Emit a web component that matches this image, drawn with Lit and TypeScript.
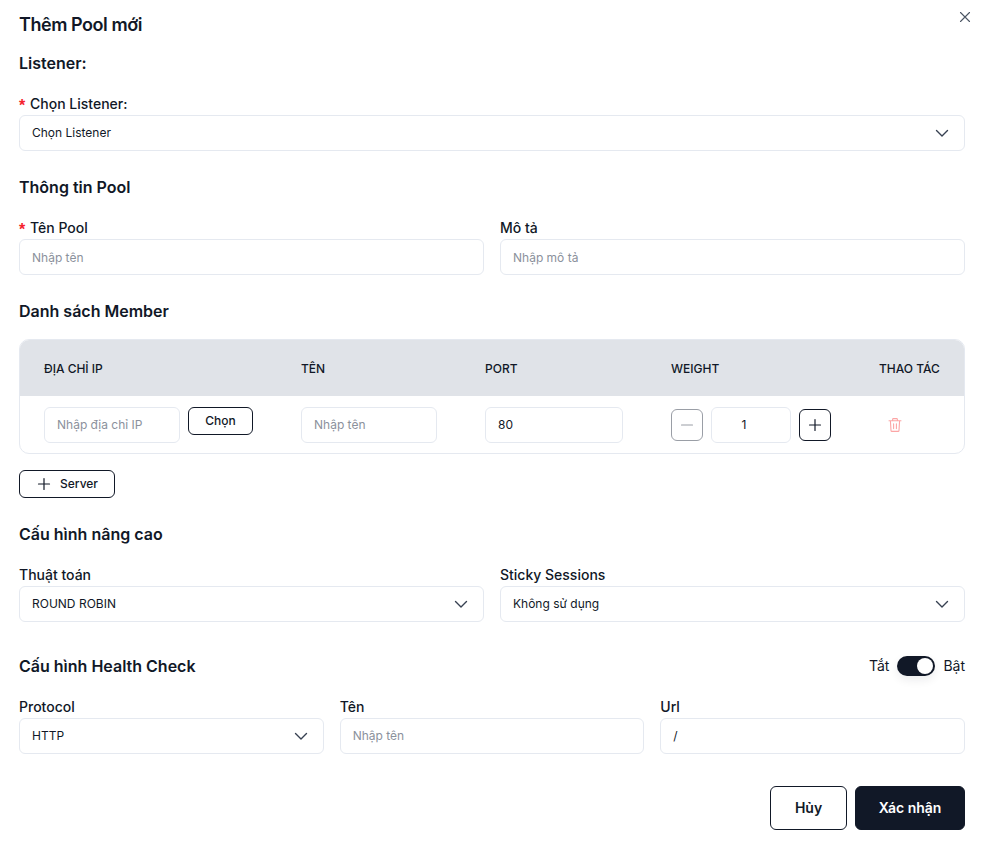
import { LitElement, html, css } from "lit";
import { customElement } from "lit/decorators.js";

const chevron = html`<svg class="chev" width="14" height="14" viewBox="0 0 14 14" fill="none"><path d="M1.5 4.5 7 10l5.5-5.5" stroke="#374151" stroke-width="1.4" stroke-linecap="round" stroke-linejoin="round"/></svg>`;
const plus = (c: string) => html`<svg width="14" height="14" viewBox="0 0 14 14" fill="none"><path d="M7 1.5v11M1.5 7h11" stroke="${c}" stroke-width="1.2" stroke-linecap="round"/></svg>`;
const minus = (c: string) => html`<svg width="14" height="14" viewBox="0 0 14 14" fill="none"><path d="M1.5 7h11" stroke="${c}" stroke-width="1.2" stroke-linecap="round"/></svg>`;

@customElement("app-root")
export class AppRoot extends LitElement {
  static styles = css`
    :host { display: block; width: 985px; height: 845px; box-sizing: border-box; background: #fff; position: relative; overflow: hidden;
      font-family: Inter, "Noto Sans", sans-serif; color: #111827; }
    * { box-sizing: border-box; }
    .page { padding: 13px 20px 0 19px; display: flex; flex-direction: column; }
    .close { position: absolute; top: 11px; right: 14px; width: 12px; height: 12px; display: block; }
    h1 { margin: 0; font-size: 18px; line-height: 24px; font-weight: 600; color: #111827; letter-spacing: -0.45px; }
    h2 { margin: 0; font-size: 16px; line-height: 24px; font-weight: 600; color: #111827; }
    .h-listener { margin-top: 14px; }
    .h-info { margin-top: 24px; }
    .h-member { margin-top: 24px; }
    .h-adv { margin-top: 24px; }
    .field { display: flex; flex-direction: column; min-width: 0; }
    .label { height: 20px; font-size: 14px; line-height: 20px; font-weight: 500; color: #111827; margin-bottom: 1px; display: flex; }
    .req { color: #f5222d; width: 11px; flex: none; padding-top: 2px; font: 700 16px/20px "Liberation Sans", sans-serif; }
    .ctl { height: 36px; border: 1px solid #e5e9f0; border-radius: 6px; background: #fff; padding: 0 12px; font-size: 12px; line-height: 18px;
      display: flex; align-items: center; color: #111827; white-space: nowrap; min-width: 0; }
    .ph { color: #8b919c; }
    .nudge { padding-top: 2px; }
    .sel { justify-content: space-between; padding-right: 15px; }
    .chev { flex: none; }
    .mt-l { margin-top: 19px; }
    .two { display: grid; grid-template-columns: 1fr 1fr; gap: 16px; margin-top: 19px; }
    .three { display: grid; grid-template-columns: 1fr 1fr 1fr; gap: 16px; margin-top: 21px; }
    .table { margin-top: 16px; border: 1px solid #e5e9f0; border-radius: 10px; overflow: hidden; }
    .tr { display: grid; grid-template-columns: 257px 184px 186px 208px 61px; padding: 0 24px; align-items: center; }
    .thead { height: 56px; padding-top: 2px; background: #e0e3e8; font-size: 12px; font-weight: 500; color: #111827; line-height: 18px; white-space: nowrap; }
    .trow { height: 57px; border-top: 1px solid #fff; }
    .ip { display: flex; gap: 8px; align-items: flex-start; }
    .w136 { width: 136px; }
    .w138 { width: 138px; }
    .btn-s { height: 28px; border: 1px solid #111827; border-radius: 6px; background: #fff; font: 500 12px/18px Inter, sans-serif; color: #111827;
      display: flex; align-items: center; justify-content: center; padding: 0; }
    .choose { width: 65px; }
    .stepper { display: flex; align-items: center; gap: 8px; }
    .step { width: 32px; height: 32px; border: 1px solid #111827; border-radius: 6px; background: #fff; display: flex; align-items: center; justify-content: center; padding: 0; }
    .step.off { border-color: #9a9ea6; }
    .num { width: 80px; justify-content: center; padding: 0 14px 0 0; }
    .trash { display: block; margin-left: 8px; }
    .add { width: 96px; margin-top: 16px; gap: 9px; padding-left: 1px; }
    .hc { display: flex; justify-content: space-between; align-items: center; margin-top: 34px; height: 20px; }
    .switch { display: flex; align-items: center; gap: 8px; font-size: 14px; line-height: 20px; color: #111827; }
    .track { width: 38px; height: 20px; border-radius: 10px; background: #111827; position: relative; box-shadow: 0 4px 10px rgba(17,24,39,.08); }
    .knob { position: absolute; right: 2px; top: 2px; width: 16px; height: 16px; border-radius: 50%; background: #fff; }
    .footer { display: flex; justify-content: flex-end; gap: 8px; margin-top: 32px; }
    .btn { height: 44px; border-radius: 6px; font: 600 14px/20px Inter, sans-serif; padding: 0; }
    .cancel { width: 77px; background: #fff; border: 1px solid #111827; color: #111827; }
    .ok { width: 110px; background: #111827; border: 1px solid #111827; color: #fff; }
  `;

  render() {
    return html`
      <svg class="close" viewBox="0 0 12 12" fill="none"><path d="M1.5 1.5l9 9M10.5 1.5l-9 9" stroke="#4b5563" stroke-width="1.1" stroke-linecap="round"/></svg>
      <div class="page">
        <h1>Thêm Pool mới</h1>
        <h2 class="h-listener">Listener:</h2>
        <div class="field mt-l">
          <div class="label"><span class="req">*</span><span>Chọn Listener:</span></div>
          <div class="ctl sel"><span>Chọn Listener</span>${chevron}</div>
        </div>
        <h2 class="h-info">Thông tin Pool</h2>
        <div class="two">
          <div class="field"><div class="label"><span class="req">*</span><span>Tên Pool</span></div><div class="ctl ph nudge">Nhập tên</div></div>
          <div class="field"><div class="label">Mô tả</div><div class="ctl ph nudge">Nhập mô tả</div></div>
        </div>
        <h2 class="h-member">Danh sách Member</h2>
        <div class="table">
          <div class="tr thead"><div>ĐỊA CHỈ IP</div><div>TÊN</div><div>PORT</div><div>WEIGHT</div><div>THAO TÁC</div></div>
          <div class="tr trow">
            <div class="ip"><div class="ctl ph w136">Nhập địa chỉ IP</div><button class="btn-s choose">Chọn</button></div>
            <div><div class="ctl ph w136">Nhập tên</div></div>
            <div><div class="ctl w138">80</div></div>
            <div class="stepper">
              <button class="step off">${minus("#9a9ea6")}</button>
              <div class="ctl num">1</div>
              <button class="step">${plus("#111827")}</button>
            </div>
            <div>
              <svg class="trash" width="16" height="16" viewBox="0 0 16 16" fill="none" stroke="#fca5a5" stroke-width="1.1" stroke-linecap="round" stroke-linejoin="round"><path d="M2 3.8h12M5.6 3.8V2.5c0-.5.4-.9.9-.9h3c.5 0 .9.4.9.9v1.3M3.4 3.8l.6 9.6c0 .6.5 1 1 1h6c.5 0 1-.4 1-1l.6-9.6M6.6 6.8v4.8M9.4 6.8v4.8"/></svg>
            </div>
          </div>
        </div>
        <button class="btn-s add">${plus("#111827")}<span>Server</span></button>
        <h2 class="h-adv">Cấu hình nâng cao</h2>
        <div class="two">
          <div class="field"><div class="label">Thuật toán</div><div class="ctl sel"><span>ROUND ROBIN</span>${chevron}</div></div>
          <div class="field"><div class="label">Sticky Sessions</div><div class="ctl sel"><span>Không sử dụng</span>${chevron}</div></div>
        </div>
        <div class="hc">
          <h2>Cấu hình Health Check</h2>
          <div class="switch"><span>Tắt</span><div class="track"><div class="knob"></div></div><span>Bật</span></div>
        </div>
        <div class="three">
          <div class="field"><div class="label">Protocol</div><div class="ctl sel"><span>HTTP</span>${chevron}</div></div>
          <div class="field"><div class="label">Tên</div><div class="ctl ph">Nhập tên</div></div>
          <div class="field"><div class="label">Url</div><div class="ctl">/</div></div>
        </div>
        <div class="footer">
          <button class="btn cancel">Hủy</button>
          <button class="btn ok">Xác nhận</button>
        </div>
      </div>
    `;
  }
}
